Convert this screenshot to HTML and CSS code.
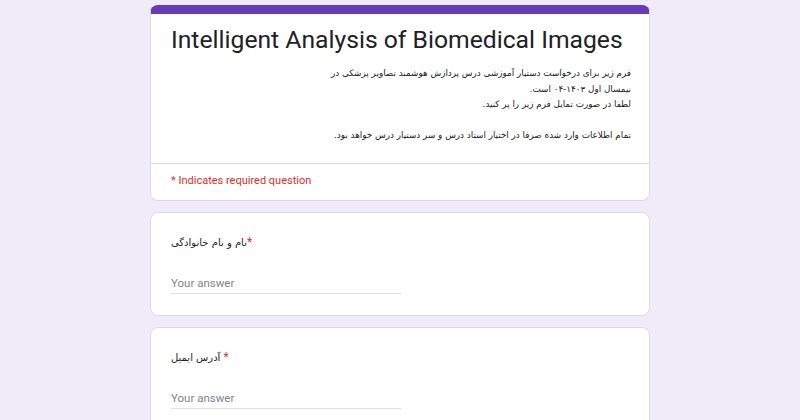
FILE: index.html
```html
<!DOCTYPE html>
<html lang="fa">
<head>
    <meta charset="UTF-8">
    <title>Intelligent Analysis of Biomedical Images</title>
    <link rel="stylesheet" href="styles.css">
</head>
<body>
    <div class="form">
        <div class="card header-card">
            <div class="header-body">
                <h1 class="form-title">Intelligent Analysis of Biomedical Images</h1>
                <div class="description" dir="rtl">
                    فرم زیر برای درخواست دستیار آموزشی درس پردازش هوشمند تصاویر پزشکی در<br>
                    نیمسال اول ۱۴۰۳-۰۴ است.<br>
                    لطفا در صورت تمایل فرم زیر را پر کنید.<br>
                    <br>
                    تمام اطلاعات وارد شده صرفا در اختیار استاد درس و سر دستیار درس خواهد بود.
                </div>
            </div>
            <div class="required-note">* Indicates required question</div>
        </div>

        <div class="card question">
            <div class="question-title">نام و نام خانوادگی<span class="star">*</span></div>
            <div class="answer">Your answer</div>
        </div>

        <div class="card question">
            <div class="question-title">آدرس ایمیل <span class="star">*</span></div>
            <div class="answer">Your answer</div>
        </div>
    </div>
</body>
</html>
```

FILE: styles.css
```css
body {
    margin: 0;
    padding: 0;
    background: #f0ebf8;
    font-family: Roboto, "DejaVu Sans", sans-serif;
    color: #202124;
    overflow: hidden;
}
.form {
    width: 500px;
    margin: 5px auto 0;
    display: flex;
    flex-direction: column;
    gap: 11px;
}
.card {
    background: white;
    border: 1px solid #dadce0;
    border-radius: 8px;
    box-sizing: border-box;
}
.header-card {
    border-top: 9px solid #673ab7;
}
.header-body {
    padding: 11px 18px 19px 20px;
    border-bottom: 1px solid #dadce0;
}
.form-title {
    margin: 0 0 11px;
    font-size: 24.7px;
    font-weight: 400;
    line-height: 30px;
    white-space: nowrap;
    color: #202124;
}
.description {
    font-family: "DejaVu Sans", sans-serif;
    font-size: 8.8px;
    line-height: 15.5px;
    color: #202124;
    text-align: right;
}
.required-note {
    padding: 9px 20px 11px;
    font-size: 11px;
    color: #d93025;
    line-height: 16px;
}
.question {
    padding: 21px 20px 21px;
}
.question-title {
    font-family: "DejaVu Sans", sans-serif;
    font-size: 10px;
    line-height: 16px;
    color: #202124;
}
.star {
    color: #d93025;
    font-family: Roboto, sans-serif;
    font-size: 12px;
}
.answer {
    margin-top: 24px;
    width: 230px;
    padding-bottom: 2px;
    border-bottom: 1px solid #e0e0e0;
    font-size: 11.5px;
    color: #80868b;
    line-height: 16px;
}
```
